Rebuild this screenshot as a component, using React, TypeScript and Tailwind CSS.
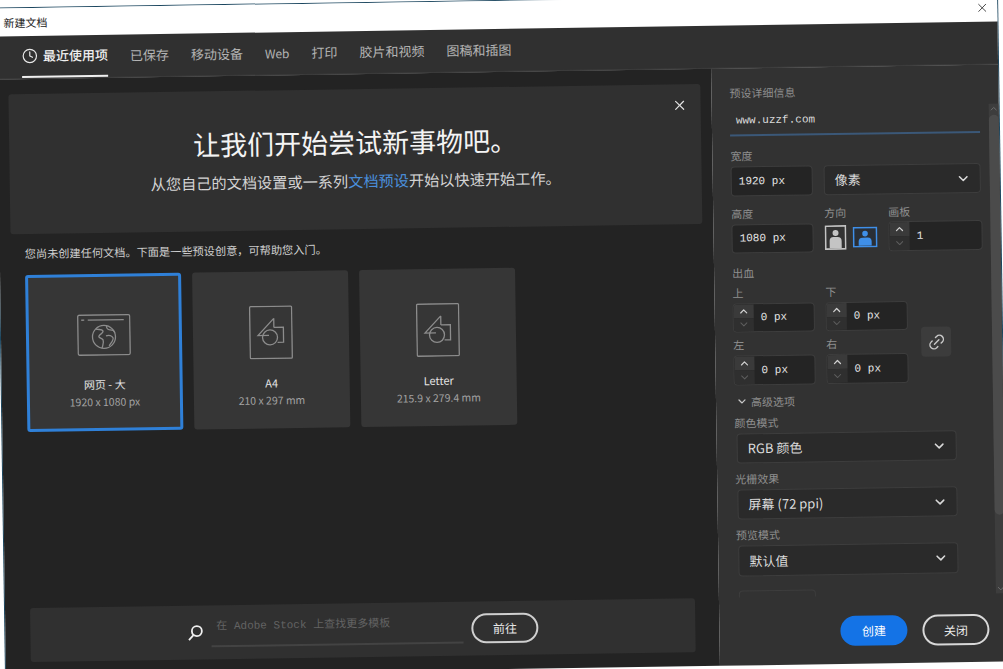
import { Clock, X, ChevronDown, ChevronUp, Link2 } from "lucide-react";

const cjk = "font-['Noto_Sans_CJK_SC','Noto_Sans',sans-serif]";
const mono = "font-['Liberation_Mono','Noto_Sans_CJK_SC',monospace]";

const tabs = ["已保存", "移动设备", "Web", "打印", "胶片和视频", "图稿和插图"];

const WebIcon = () => (
  <svg width="54" height="42" viewBox="0 0 54 42" fill="none" stroke="#8c8c8c" strokeWidth="1.3">
    <rect x="1" y="1" width="52" height="40" rx="1.5" />
    <path d="M4.5 6h3M11 6h36" />
    <circle cx="27" cy="23" r="11.5" />
    <path d="M19 15c3 1 6 0 7 2s-3 3-4 5 3 2 4 4 0 4-1 8M30 12c-1 2 1 4 3 4s4 0 5 3M29 22c3-1 6 0 7 2s-2 5-4 8" />
  </svg>
);

const ShapesIcon = () => (
  <svg width="44" height="54" viewBox="0 0 44 54" fill="none" stroke="#8c8c8c" strokeWidth="1.3">
    <rect x="1" y="1" width="42" height="52" rx="1" />
    <path d="M25 13 9 30h11M25 13v9M25 22h9.5v15h-6" />
    <circle cx="21" cy="32" r="7.5" />
  </svg>
);

const Card = ({
  title,
  size,
  active,
  children,
}: {
  title: string;
  size: string;
  active?: boolean;
  children: React.ReactNode;
}) => (
  <div
    className={`flex h-[157px] w-[156px] flex-col items-center rounded-[3px] bg-[#363636] ${
      active ? "border-[3px] border-[#2f80d8]" : ""
    }`}
  >
    <div className={`flex h-[104px] w-full items-center justify-center pt-[17px] ${active ? "-mt-[3px]" : ""}`}>
      {children}
    </div>
    <div className={`text-[11px] leading-[15px] text-[#e4e4e4] ${active ? "-mt-[1px]" : ""}`}>{title}</div>
    <div className="mt-[2px] text-[10.5px] leading-[15px] text-[#a2a2a2]">{size}</div>
  </div>
);

const Label = ({ children, className = "" }: { children: React.ReactNode; className?: string }) => (
  <div className={`h-[14px] text-[11px] leading-[14px] text-[#8f8f8f] ${className}`}>{children}</div>
);

const Box = ({ value, className = "" }: { value: string; className?: string }) => (
  <div
    className={`${mono} flex items-center rounded-[4px] border border-[#3d3d3d] bg-[#242424] pl-[7px] text-[11px] text-[#e6e6e6] ${className}`}
  >
    {value}
  </div>
);

const Stepper = ({ value, className = "" }: { value: string; className?: string }) => (
  <div className={`flex overflow-hidden rounded-[4px] border border-[#3d3d3d] bg-[#242424] ${className}`}>
    <div className="flex w-[20px] flex-col">
      <div className="flex flex-1 items-center justify-center bg-[#3a3a3a]">
        <ChevronUp size={12} strokeWidth={2.5} color="#d0d0d0" />
      </div>
      <div className="flex flex-1 items-center justify-center bg-[#2f2f2f]">
        <ChevronDown size={12} strokeWidth={2} color="#5e5e5e" />
      </div>
    </div>
    <div className={`${mono} flex flex-1 items-center pl-[7px] text-[11px] text-[#e6e6e6]`}>{value}</div>
  </div>
);

const Select = ({ value, className = "" }: { value: string; className?: string }) => (
  <div
    className={`flex h-[30px] items-center justify-between rounded-[4px] border border-[#3d3d3d] bg-[#2a2a2a] pl-[10px] pr-[9px] text-[13px] text-[#dcdcdc] ${className}`}
  >
    <span>{value}</span>
    <ChevronDown size={15} strokeWidth={2.5} color="#d8d8d8" />
  </div>
);

export default function App() {
  return (
    <div className={`${cjk} h-[669px] w-[1003px] overflow-hidden bg-white`}>
      <div className="flex h-[669px] w-[1003px] rotate-[-0.85deg] flex-col border-x border-t border-[#1b465f]">
        {/* title bar */}
        <div className="flex h-[28px] items-center justify-between bg-white pl-[7px] pr-[8px] text-[11px] text-[#222]">
          <span>新建文档</span>
          <X size={14} strokeWidth={1.5} color="#333" />
        </div>

        {/* tabs */}
        <div className="flex h-[43px] gap-[22px] border-b border-[#3d3d3d] bg-[#303030] pl-[25px] text-[13px] text-[#b4b4b4]">
          <div className="flex h-[42px] items-center gap-[5px] border-b-[2px] border-[#f0f0f0] font-medium text-[#f0f0f0]">
            <Clock size={16} strokeWidth={1.8} color="#e8e8e8" />
            <span>最近使用项</span>
          </div>
          {tabs.map((tab) => (
            <div key={tab} className={`flex h-[42px] items-center ${tab === "Web" ? "text-[12px]" : ""}`}>
              {tab}
            </div>
          ))}
        </div>

        <div className="flex flex-1">
          {/* left side */}
          <div className="flex w-[715px] flex-col bg-[#232323]">
            <div className="relative mx-[11px] mt-[15px] flex h-[140px] flex-col items-center rounded-[3px] bg-[#303030] pt-[35px]">
              <button className="absolute right-[13px] top-[13px]">
                <X size={16} strokeWidth={1.8} color="#e0e0e0" />
              </button>
              <h1 className="text-[27px] font-normal leading-[36px] text-[#f4f4f4]">让我们开始尝试新事物吧。</h1>
              <p className="mt-[10px] text-[15.2px] leading-[20px] text-[#d4d4d4]">
                从您自己的文档设置或一系列<span className="text-[#4a8fdc]">文档预设</span>开始以快速开始工作。
              </p>
            </div>

            <p className="ml-[25px] mt-[12px] text-[11.2px] leading-[14px] text-[#cfcfcf]">
              您尚未创建任何文档。下面是一些预设创意，可帮助您入门。
            </p>

            <div className="ml-[25px] mt-[15px] flex gap-[11px]">
              <Card title="网页 - 大" size="1920 x 1080 px" active>
                <WebIcon />
              </Card>
              <Card title="A4" size="210 x 297 mm">
                <ShapesIcon />
              </Card>
              <Card title="Letter" size="215.9 x 279.4 mm">
                <ShapesIcon />
              </Card>
            </div>

            <div className="mb-[14px] ml-[25px] mt-auto flex h-[54px] w-[665px] items-center rounded-[3px] bg-[#303030] pl-[157px]">
              <svg width="16" height="17" viewBox="0 0 16 17" fill="none" stroke="#f0f0f0" strokeWidth="1.8">
                <circle cx="9.5" cy="6.5" r="5" />
                <path d="M6 10.5 1.5 15.5" />
              </svg>
              <div className="ml-[8px] flex h-[30px] w-[252px] items-start border-b-[2px] border-[#434343] pl-[5px]">
                <span className={`${mono} text-[11px] leading-[18px] text-[#636363]`}>在 Adobe Stock 上查找更多模板</span>
              </div>
              <button className="ml-[8px] h-[30px] w-[67px] rounded-full border-[2px] border-[#cfcfcf] text-[12px] text-[#e8e8e8]">
                前往
              </button>
            </div>
          </div>

          {/* right side */}
          <div className="flex flex-1 flex-col bg-[#323232]">
            <div className="flex h-[529px] overflow-hidden pl-[18px]">
              <div className="w-[252px] pt-[17px]">
                <Label>预设详细信息</Label>
                <div
                  className={`${mono} mt-[7px] flex h-[30px] w-[250px] items-center border-b-[2px] border-[#3b5878] pl-[6px] text-[11px] text-[#dcdcdc]`}
                >
                  www.uzzf.com
                </div>

                <Label className="mt-[12px]">宽度</Label>
                <div className="mt-[4px] flex gap-[11px]">
                  <Box value="1920 px" className="h-[30px] w-[82px]" />
                  <Select value="像素" className="w-[157px]" />
                </div>

                <div className="mt-[10px] flex gap-[11px]">
                  <div className="w-[82px]">
                    <Label>高度</Label>
                    <Box value="1080 px" className="mt-[4px] h-[29px]" />
                  </div>
                  <div className="w-[53px]">
                    <Label>方向</Label>
                    <div className="mt-[6px] flex items-center gap-[6px]">
                      <svg width="22" height="25" viewBox="0 0 22 25">
                        <rect x="1" y="1" width="20" height="23" fill="#333" stroke="#c4c4c4" strokeWidth="1.6" />
                        <circle cx="11" cy="8" r="3" fill="#c4c4c4" />
                        <path d="M5 23v-7q0-4 4-4h4q4 0 4 4v7z" fill="#c4c4c4" />
                      </svg>
                      <svg width="25" height="21" viewBox="0 0 25 21">
                        <rect x="1" y="1" width="23" height="19" fill="#2a2f36" stroke="#3f8fe8" strokeWidth="1.6" />
                        <circle cx="12.5" cy="7" r="2.8" fill="#3f8fe8" />
                        <path d="M6 19v-4q0-4 4-4h5q4 0 4 4v4z" fill="#3f8fe8" />
                      </svg>
                    </div>
                  </div>
                  <div className="w-[94px]">
                    <Label>画板</Label>
                    <Stepper value="1" className="mt-[3px] h-[30px]" />
                  </div>
                </div>

                <Label className="mt-[12px]">出血</Label>
                <div className="mt-[6px] flex">
                  <div className="grid w-[175px] grid-cols-[82px_82px] gap-x-[11px]">
                    <div>
                      <Label>上</Label>
                      <Stepper value="0 px" className="mt-[4px] h-[29px]" />
                    </div>
                    <div>
                      <Label>下</Label>
                      <Stepper value="0 px" className="mt-[4px] h-[29px]" />
                    </div>
                    <div className="mt-[5px]">
                      <Label>左</Label>
                      <Stepper value="0 px" className="mt-[4px] h-[30px]" />
                    </div>
                    <div className="mt-[5px]">
                      <Label>右</Label>
                      <Stepper value="0 px" className="mt-[4px] h-[30px]" />
                    </div>
                  </div>
                  <div className="ml-[13px] mt-[44px] flex h-[30px] w-[30px] items-center justify-center rounded-[4px] bg-[#3c3c3c]">
                    <Link2 size={19} strokeWidth={1.8} color="#c8c8c8" className="-rotate-45" />
                  </div>
                </div>

                <div className="mt-[9px] flex items-center gap-[3px] pl-[2px]">
                  <ChevronDown size={12} strokeWidth={2.5} color="#c8c8c8" />
                  <Label>高级选项</Label>
                </div>
                <Label className="mt-[7px]">颜色模式</Label>
                <Select value="RGB 颜色" className="ml-[2px] mt-[4px] w-[220px]" />
                <Label className="mt-[8px]">光栅效果</Label>
                <Select value="屏幕 (72 ppi)" className="ml-[2px] mt-[4px] w-[220px]" />
                <Label className="mt-[8px]">预览模式</Label>
                <Select value="默认值" className="ml-[2px] mt-[4px] h-[31px] w-[220px]" />
                <div className="ml-[2px] mt-[14px] h-[12px] w-[77px] rounded-t-[4px] border border-[#3d3d3d]" />
              </div>

              {/* scrollbar */}
              <div className="ml-[7px] mt-[39px] flex h-[490px] w-[10px] flex-col items-center bg-[#3d3d3d]">
                <ChevronUp size={10} strokeWidth={2} color="#777" />
                <div className="mt-[1px] h-[400px] w-full rounded-full bg-[#4b4b4b]" />
                <ChevronDown size={10} strokeWidth={2} color="#777" className="mt-auto" />
              </div>
            </div>

            <div className="flex gap-[15px] pl-[121px] pt-[20px]">
              <button className="h-[30px] w-[67px] rounded-full bg-[#1473e6] text-[12px] text-white">创建</button>
              <button className="h-[31px] w-[67px] rounded-full border-[2px] border-[#d8d8d8] text-[12px] text-[#ececec]">
                关闭
              </button>
            </div>
          </div>
        </div>
      </div>
    </div>
  );
}
